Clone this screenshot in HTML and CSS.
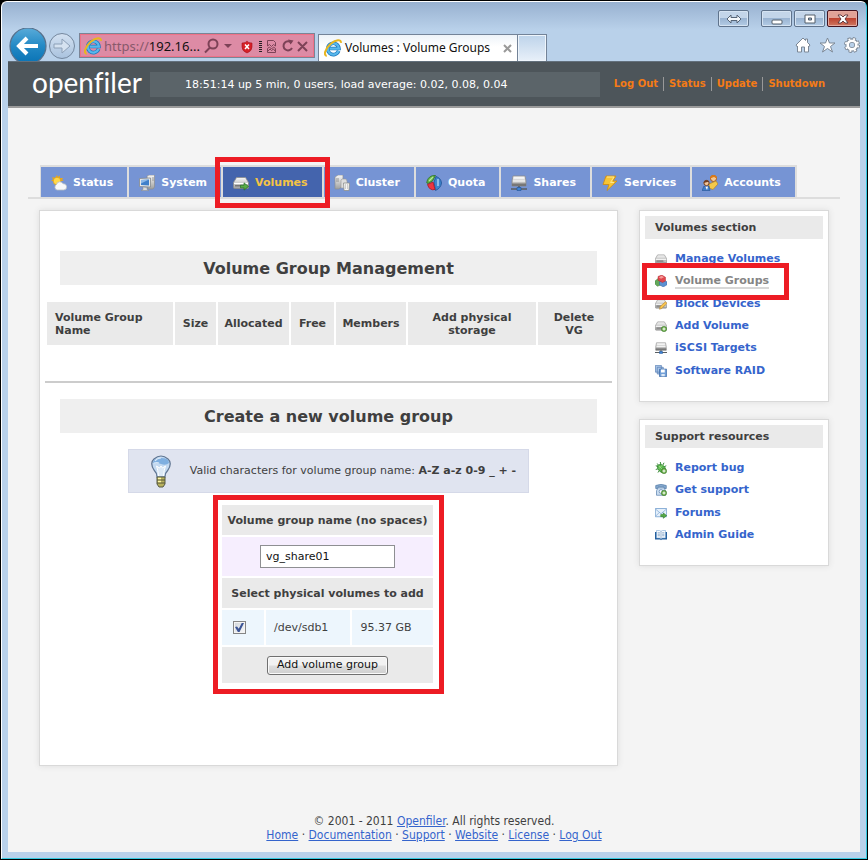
FILE: index.html
```html
<!DOCTYPE html>
<html lang="en">
<head>
<meta charset="utf-8">
<title>Volumes : Volume Groups</title>
<link rel="stylesheet" href="styles.css">
</head>
<body>
<svg class="defs" aria-hidden="true">
  <defs>
    <linearGradient id="blue" x1="0" y1="0" x2="0" y2="1"><stop offset="0" stop-color="#59abd9"/><stop offset=".5" stop-color="#2389c5"/><stop offset="1" stop-color="#0872b4"/></linearGradient>
    <linearGradient id="glass" x1="0" y1="0" x2="0" y2="1"><stop offset="0" stop-color="#d3e1f1"/><stop offset="1" stop-color="#a9c2de"/></linearGradient>
    <linearGradient id="metal" x1="0" y1="0" x2="0" y2="1"><stop offset="0" stop-color="#f8f8f8"/><stop offset="1" stop-color="#9fa09f"/></linearGradient>
    <symbol id="ie" viewBox="0 0 16 16">
      <path d="M13 10.600A5 5 0 1 1 13.300 8.500H5" fill="none" stroke="#1e78bd" stroke-width="3.200"/>
      <path d="M13 10.600A5 5 0 1 1 13.300 8.500H5" fill="none" stroke="#58b8ec" stroke-width="2"/>
      <path d="M2.500 14.800C-.5 15 .5 9 6 4.200 10.500.5 15.500 0 15 3.500" fill="none" stroke="#e8b620" stroke-width="1.800"/>
    </symbol>
    <symbol id="drive" viewBox="0 0 16 16">
      <path d="M3.500 2.500h9l3 5v5q0 1-1 1h-13q-1 0-1-1v-5z" fill="url(#metal)" stroke="#8b8b8b" stroke-width=".8"/>
      <path d="M1 8h14v1H1z" fill="#fff"/><path d="M2 10h9v1.500H2z" fill="#777"/><circle cx="13.500" cy="11" r=".8" fill="#d5e4d0"/>
    </symbol>
    <symbol id="server" viewBox="0 0 16 16">
      <path d="M2 1h12l1 5v5H1V6z" fill="url(#metal)" stroke="#8b8b8b" stroke-width=".8"/>
      <path d="M3 3h10M2 6h12" stroke="#fff"/><path d="M1 8.500h14v2.500H1z" fill="#777"/>
      <path d="M0 14h16M8 11v3" stroke="#5a5e62" stroke-width="1.600"/><path d="M6 12.500h4v3H6z" fill="#3c83d8" stroke="#205294" stroke-width=".6"/>
    </symbol>
    <symbol id="plus" viewBox="0 0 8 8"><circle cx="4" cy="4" r="3.600" fill="#65a843" stroke="#39752a" stroke-width=".6"/><path d="M4 2v4M2 4h4" stroke="#fff" stroke-width="1.300"/></symbol>
    <symbol id="arrow" viewBox="0 0 10 9"><path d="M.5 3h4V.5l5 4-5 4V6h-4z" fill="#58ad45" stroke="#247126" stroke-width=".8"/></symbol>
  </defs>
</svg>

<div class="window">
  <div class="titlebar">
    <button class="win-btn detach" aria-label="Switch"><svg viewBox="0 0 16 10" width="16" height="10"><path d="M1 5l4-4v2.500h6V1l4 4-4 4V6.500H5V9z" fill="#f4f7fa" stroke="#566577"/></svg></button>
    <button class="win-btn" aria-label="Minimize"><svg viewBox="0 0 12 12" width="12" height="12"><rect x="1" y="7" width="10" height="4" rx="1" fill="#fff" stroke="#525e6b"/></svg></button>
    <button class="win-btn" aria-label="Maximize"><svg viewBox="0 0 12 12" width="12" height="12"><path d="M1 2h10v8H1zM4.500 5v2h3V5z" fill="#fff" fill-rule="evenodd" stroke="#525e6b"/></svg></button>
    <button class="win-btn close" aria-label="Close"><svg viewBox="0 0 12 10" width="12" height="10"><path d="M1 1h3l2 2 2-2h3L8 5l3 4H8L6 7 4 9H1l3-4z" fill="#fff" stroke="#573238" stroke-width=".9"/></svg></button>
  </div>

  <div class="navbar">
    <button class="nav-btn" aria-label="Back"><svg class="back" viewBox="0 0 40 38" width="40" height="38"><circle cx="20" cy="18" r="18" fill="url(#blue)" stroke="#57708b" stroke-width="1.200"/><path d="M30 18H12M19 10l-8 8 8 8" fill="none" stroke="#fff" stroke-width="4"/></svg></button>
    <button class="nav-btn" aria-label="Forward"><svg viewBox="0 0 28 36" width="28" height="36"><circle cx="14" cy="18" r="12.500" fill="url(#glass)" stroke="#74879e"/><path d="M6 16h8v-5l8 7-8 7v-5H6z" fill="#d5e2f0" stroke="#8da0b7"/></svg></button>
    <div class="address">
      <svg width="18" height="18"><use href="#ie"/></svg>
      <span class="url"><span class="scheme">https://</span>192.16...</span>
      <svg class="address-tools" viewBox="0 0 106 16" width="106" height="16">
        <g fill="none" stroke="#7d4257" stroke-width="2"><circle cx="9" cy="6" r="4.500"/><path d="M6 9.500L1 14.500"/><path d="M87.500 5A4.500 4.500 0 1 0 88 10M94 4l9 9M103 4l-9 9"/></g>
        <path d="M20 6h8l-4 4zM84 1.500l5.500 1-3 4z" fill="#7d4257"/>
        <path d="M38 5q4 0 5-2 1 2 5 2v4q0 4-5 6-5-2-5-6z" fill="#d62027" stroke="#a5131b" stroke-width=".6"/><path d="M41 6.500l4 4.500M45 6.500L41 11" stroke="#fff" stroke-width="1.500"/>
        <path d="M56.500 3v11" stroke="#222" stroke-width="3" stroke-dasharray="1 1"/>
        <path d="M63.500 2.500h6l2 2v3.500l-2-1.500-2 2-2-2-2 1.500zM63.500 10.500l2-1.500 2 2 2-2 2 1.500v4h-8z" fill="none" stroke="#7d4257"/><path d="M64 13l2-2 1.500 1.500 2-1.500 1.500 2" fill="none" stroke="#7d4257"/>
      </svg>
    </div>
    <div class="browser-tab">
      <svg width="18" height="18"><use href="#ie"/></svg>
      <span>Volumes : Volume Groups</span>
      <button class="tab-close" aria-label="Close tab"><svg viewBox="0 0 9 9" width="9" height="9"><path d="M1 1l7 7M8 1L1 8" stroke="#999" stroke-width="2"/></svg></button>
    </div>
    <button class="new-tab" aria-label="New tab"></button>
    <div class="nav-icons">
      <svg viewBox="0 0 16 16" width="16" height="16"><path d="M1 8l7-7 2.500 2.500V2h2v3.500L15 8l-1 1.500-.5-.5v6h-4v-5h-3v5h-4V9l-.5.500z" fill="#fff" stroke="#7b8795"/></svg>
      <svg viewBox="0 0 17 16" width="17" height="16"><path d="M8.500 1l2 5h5.500l-4.500 3.500 2 5.500-5-3.500-5 3.500 2-5.500L1 6h5.500z" fill="#fff" stroke="#7b8795"/></svg>
      <svg viewBox="0 0 16 16" width="16" height="16"><circle cx="8" cy="8" r="6.500" fill="none" stroke="#7b8795" stroke-width="3" stroke-dasharray="3 2.100"/><circle cx="8" cy="8" r="4.500" fill="none" stroke="#7b8795" stroke-width="4.400"/><circle cx="8" cy="8" r="6.200" fill="none" stroke="#fff" stroke-width="1.800" stroke-dasharray="1.900 2.970" stroke-dashoffset="-.5"/><circle cx="8" cy="8" r="4.300" fill="none" stroke="#fff" stroke-width="2.600"/></svg>
    </div>
  </div>

  <div class="page">
    <header class="site-header">
      <div class="logo">openfiler</div>
      <div class="uptime">18:51:14 up 5 min, 0 users, load average: 0.02, 0.08, 0.04</div>
      <nav class="account-links"><a href="#">Log Out</a><a href="#">Status</a><a href="#">Update</a><a href="#">Shutdown</a></nav>
    </header>

    <nav class="tabs">
      <ul>
        <li><a href="#"><svg class="icon" viewBox="0 0 16 16"><path d="M6 0l1 2 2-1.500V3l3 0-1 2 2 1H0l2-1.500L1 2l3 1z" fill="#e9a61c"/><circle cx="6" cy="6" r="3.800" fill="#ffd84a" stroke="#d79a19" stroke-width=".7"/><path d="M6 15a3 3 0 0 1-.5-5.500 3.500 3.500 0 0 1 6.500-.8A3 3 0 0 1 13 15z" fill="#f7f8f9" stroke="#b6bcc2" stroke-width=".8"/></svg>Status</a></li>
        <li><a href="#"><svg class="icon" viewBox="0 0 16 16"><path d="M8 1l2-1h5.500v12L14 14H9z" fill="url(#metal)" stroke="#898d90" stroke-width=".7"/><path d="M13 3h2M13 5h2" stroke="#888" stroke-width=".8"/><path d="M.5 3.500l11-.5v9l-11-.5z" fill="#e6e8e9" stroke="#858a8e" stroke-width=".8"/><path d="M2 5l8-.5v6L2 10z" fill="#3f7fca"/><path d="M2 5l8-.5-8 4z" fill="#8bb7e8"/><path d="M4 12l4 .5v2l2 1H2l2-1z" fill="#d9dbdc" stroke="#888" stroke-width=".5"/></svg>System</a></li>
        <li class="active"><a href="#"><svg class="icon" viewBox="0 0 16 16"><use href="#drive"/><use href="#arrow" x="7" y="7" width="9" height="9"/></svg>Volumes</a><span class="highlight tab-highlight"></span></li>
        <li><a href="#"><svg class="icon" viewBox="0 0 16 16"><path d="M1 2l3-2h5v11l-4 3H1z" fill="url(#metal)" stroke="#8c8f92" stroke-width=".7"/><path d="M2 4h3M2 6h3" stroke="#777" stroke-width=".7"/><path d="M8 4h4l1 2v7H7V5z" fill="#ddd" stroke="#999" stroke-width=".6"/><path d="M9.500 8h6l-.5 7.500h-5z" fill="#f4f4f3" stroke="#8d8f8d" stroke-width=".8"/><path d="M11.500 9v5M13.500 9v5" stroke="#bbb" stroke-width=".7"/></svg>Cluster</a></li>
        <li><a href="#"><svg class="icon" viewBox="0 0 16 16"><path d="M.8 8C1 3 5 0 9.500.5L6.500 6 2 8.500z" fill="#63b345" stroke="#2b7321" stroke-width=".8"/><path d="M10 1.500q5 1.500 5.500 6.500-.5 5-6 7.500L8 7z" fill="#3c83cb" stroke="#1e5296" stroke-width=".8"/><path d="M1.500 9.500L7 7l2 7.500Q3.500 16 1.500 9.500z" fill="#ec3540" stroke="#a81721" stroke-width=".8"/><path d="M12 4v7" stroke="#a5cef1" stroke-width="1.500"/><path d="M3 6l4-4" stroke="#b6e69c" stroke-width="1.300"/></svg>Quota</a></li>
        <li><a href="#"><svg class="icon" viewBox="0 0 16 16"><use href="#server"/></svg>Shares</a></li>
        <li><a href="#"><svg class="icon" viewBox="0 0 16 16"><path d="M4 1h10l-3 5h4L5 15.500l2-6H1z" fill="#f8c535" stroke="#cf8d17" stroke-width=".9"/><path d="M5 2h7L8.500 7.500H12" fill="none" stroke="#ffe88d"/></svg>Services</a></li>
        <li><a href="#"><svg class="icon" viewBox="0 0 16 16"><circle cx="11.500" cy="3.500" r="3" fill="#f4c993" stroke="#a95517"/><path d="M8 3.500Q8 0 11.500 0T15 3.500L12 2z" fill="#dc7a16"/><path d="M7 9l7-3 2 3-5 5.500L7 13z" fill="#f3c94a" stroke="#b88420" stroke-width=".7"/><circle cx="4.500" cy="8" r="2.600" fill="#f3c69a" stroke="#74421f"/><path d="M1.500 8q1-4.500 6-1.500z" fill="#713c20"/><path d="M0 15.500L2 11l2 1.500L7 11l1 4.500z" fill="#3f7dca" stroke="#245394" stroke-width=".6"/><path d="M3.500 12l1.500 3 1-3.500z" fill="#fff"/></svg>Accounts</a></li>
      </ul>
    </nav>

    <div class="columns">
      <main class="panel main-panel">
        <h2>Volume Group Management</h2>
        <table class="groups">
          <thead><tr><th class="name">Volume Group Name</th><th class="size">Size</th><th class="allocated">Allocated</th><th class="free">Free</th><th class="members">Members</th><th class="storage">Add physical storage</th><th class="delete">Delete VG</th></tr></thead>
        </table>
        <hr>
        <h2>Create a new volume group</h2>
        <div class="hint">
          <svg viewBox="0 0 24 34" width="24" height="34"><path d="M8 23Q8 19 5 16 .5 9 5 5q7-6 14 0 4.500 4 0 11-3 3-3 7z" fill="#c3d9f1" stroke="#5f7592" stroke-width="1.200"/><path d="M4 9Q4 4 12 4t8 5q-3 3-8 1T4 9z" fill="#7fafe0"/><path d="M6 7q2-3 6-3M5 9q3-1 5 0" fill="none" stroke="#d9e8f7" stroke-width="1.200"/><path d="M9.500 22Q9 16 7.500 12l3 2 1.500-2 1.500 2 3-2q-1.500 4-2 10" fill="#dbe8f6" stroke="#fff"/><path d="M8 23h8v7l-2 3h-4l-2-3z" fill="#b8b15c" stroke="#575a45"/><path d="M8 26h8M8 29h8" stroke="#54553b" stroke-width="1.200"/><path d="M9 24.500h3M9 27.500h3" stroke="#fff7a9" stroke-width="1.300"/></svg>
          <p>Valid characters for volume group name: <b>A-Z a-z 0-9 _ + -</b></p>
        </div>
        <form class="create-form">
          <table>
            <tr><th colspan="3"><label for="vg-name">Volume group name (no spaces)</label></th></tr>
            <tr class="name-row"><td colspan="3"><input id="vg-name" type="text" value="vg_share01"></td></tr>
            <tr><th colspan="3">Select physical volumes to add</th></tr>
            <tr class="volume-row"><td><input id="sdb1" type="checkbox" checked></td><td><label for="sdb1">/dev/sdb1</label></td><td>95.37 GB</td></tr>
            <tr class="submit-row"><td colspan="3"><button type="button">Add volume group</button></td></tr>
          </table>
        </form>
      </main>

      <aside>
        <section class="panel side-panel">
          <h3>Volumes section</h3>
          <ul class="six">
            <li><svg viewBox="0 0 16 16"><use href="#drive"/></svg><a href="#">Manage Volumes</a></li>
            <li class="current"><svg viewBox="0 0 16 16"><path d="M0 8l5-4 5 3-1 6-6 2-3-3z" fill="#64a95a" stroke="#3c7b39" stroke-width=".6"/><path d="M6 9l5-2 5 2v4l-5 3-5-3z" fill="#5d91d2" stroke="#2d5d9f" stroke-width=".6"/><path d="M4 2l5-2 5 3v5l-4 2-6-3z" fill="#e1464d" stroke="#ae2830" stroke-width=".6"/><path d="M5 3l4-2 3 2-4 2z" fill="#f69b98"/></svg><a href="#">Volume Groups</a><span class="highlight item-highlight"></span></li>
            <li><svg viewBox="0 0 16 16"><use href="#drive"/><path d="M6 15l1-4 7-6 2 2-7 7z" fill="#f8c44d" stroke="#a97926" stroke-width=".7"/></svg><a href="#">Block Devices</a></li>
            <li><svg viewBox="0 0 16 16"><use href="#drive"/><use href="#plus" x="8" y="8" width="8" height="8"/></svg><a href="#">Add Volume</a></li>
            <li><svg viewBox="0 0 16 16"><use href="#server"/></svg><a href="#">iSCSI Targets</a></li>
            <li><svg viewBox="0 0 16 16"><path d="M.5.500h8v9h-8zM3 3h8v9H3z" fill="#a9c5e7" stroke="#5c82b5"/><path d="M6 5.500h9.500v10H6z" fill="#72a0d8" stroke="#3d6caa"/><path d="M8 6h5v4H8z" fill="#fff"/><path d="M8.500 12h4.500v3H8.500z" fill="#dde8f5"/></svg><a href="#">Software RAID</a></li>
          </ul>
        </section>
        <section class="panel side-panel">
          <h3>Support resources</h3>
          <ul>
            <li><svg viewBox="0 0 16 16"><path d="M1 5l3 1M3 2l2 3M7 0l1 4M12 1l-2 4M1 10l3-1M4 14l2-3M15 5l-4 2" stroke="#348833" stroke-width="1.300"/><path d="M3 5q3-3 7-1 5 3 4 8-3 4-7 1-4-3-4-8z" fill="#59b84d" stroke="#2f7c2e"/><path d="M5 5l7 7M5 9l5-5" stroke="#a9df91"/><use href="#plus" x="8" y="8" width="8" height="8"/></svg><a href="#">Report bug</a></li>
            <li><svg viewBox="0 0 16 16"><path d="M1 2q7-3 14 0v4h-3V4H4v2H1z" fill="#86a9ce" stroke="#547da9"/><path d="M4 5h8l2 4v6H2V9z" fill="#c9dcef" stroke="#6086b2"/><circle cx="8" cy="10" r="2.500" fill="#fff" stroke="#6086b2"/><use href="#plus" x="8" y="8" width="8" height="8"/></svg><a href="#">Get support</a></li>
            <li><svg viewBox="0 0 16 16"><path d="M.5 2h15v11H.5z" fill="#e5f0fb" stroke="#6b9acb"/><path d="M1 3l7 6 7-6M1 12l5-5M15 12l-5-5" fill="none" stroke="#82aad4"/><use href="#arrow" x="7" y="7" width="9" height="9"/></svg><a href="#">Forums</a></li>
            <li><svg viewBox="0 0 16 16"><path d="M0 4h16v10H9l-1 1-1-1H0z" fill="#245f9e"/><path d="M2 2h4l2 1 2-1h4v10h-4l-2 1-2-1H2z" fill="#f8fbfe" stroke="#6f9dcd" stroke-width=".7"/><path d="M8 3v10M3.500 5h3M3.500 7h3M3.500 9h3M9.500 5h3M9.500 7h3M9.500 9h3" stroke="#789cc2"/></svg><a href="#">Admin Guide</a></li>
          </ul>
        </section>
      </aside>
    </div>

    <footer>
      <p>© 2001 - 2011 <a href="#">Openfiler</a>. All rights reserved.</p>
      <p><a href="#">Home</a> · <a href="#">Documentation</a> · <a href="#">Support</a> · <a href="#">Website</a> · <a href="#">License</a> · <a href="#">Log Out</a></p>
    </footer>
  </div>
</div>
</body>
</html>
```
FILE: styles.css
```css
* { box-sizing: border-box; }

body {
  margin: 0;
  padding: 1px;
  background: #000;
  font: 11px/14px "DejaVu Sans", Verdana, sans-serif;
  color: #3f3f3f;
}

h2, h3, p, ul { margin: 0; padding: 0; }
ul { list-style: none; }
svg { display: block; flex: none; }
button { font: inherit; padding: 0; border: 0; background: none; }
.defs { position: absolute; width: 0; height: 0; }

/* Browser window */
.window {
  display: flex;
  flex-direction: column;
  min-height: calc(100vh - 2px);
  padding: 0 6px 6px;
  border: 1px solid #fff;
  border-right-color: #35c9e0;
  border-bottom-color: #35c9e0;
  border-radius: 6px 6px 0 0;
  background: linear-gradient(#98b1d0, #b9d1ea 28px);
}

.titlebar {
  display: flex;
  justify-content: flex-end;
  gap: 2px;
  height: 26px;
  padding: 8px 2px 1px 0;
}

.win-btn {
  display: flex;
  align-items: center;
  justify-content: center;
  width: 31px;
  height: 17px;
  border: 1px solid #5f738c;
  border-radius: 2px;
  background: linear-gradient(#c3d5e9 48%, #9ab4d2 50%, #b4cce5);
  box-shadow: inset 0 0 0 1px #d5e3f2;
}
.win-btn.detach { margin-right: 10px; }
.win-btn.close {
  border-color: #43131f;
  background: linear-gradient(#e0a297 48%, #bd4330 50%, #cf7862);
  box-shadow: inset 0 0 0 1px #e5aaa0;
}

.navbar {
  display: flex;
  align-items: flex-start;
  height: 33px;
  overflow: hidden;
  font: 13px/18px "Noto Sans", "Segoe UI", sans-serif;
}

.address {
  display: flex;
  align-items: center;
  width: 236px;
  height: 25px;
  margin: 5px 3px 0 3px;
  padding: 0 4px;
  border: 1px solid #7b8496;
  background: #dd8ba5;
  box-shadow: inset 0 0 0 1px #ee7288;
  color: #111;
}
.url { flex: 1; margin-left: 2px; white-space: nowrap; }
.scheme { color: #87596b; }

.browser-tab {
  display: flex;
  align-items: center;
  gap: 3px;
  width: 200px;
  height: 27px;
  margin-top: 6px;
  padding: 0 5px;
  border: 1px solid #738398;
  border-bottom: 0;
  background: linear-gradient(#edf3f9, #fff 12px);
  color: #111;
  font-size: 12px;
  white-space: nowrap;
}
.tab-close { margin-left: auto; }

.new-tab {
  width: 29px;
  height: 27px;
  margin-top: 6px;
  border: 1px solid #738398;
  border-width: 1px 1px 0 0;
  background: linear-gradient(#bdd3ea, #e8f0f9);
  box-shadow: inset 0 0 0 1px #eef5fc;
}

.nav-icons { display: flex; gap: 8px; margin: 9px 0 0 auto; }

/* Page */
.page {
  flex: 1;
  background: #f4f4f4;
}

.site-header {
  display: flex;
  align-items: center;
  height: 47px;
  padding: 0 35px 0 24px;
  border-top: 1px solid #63707c;
  border-bottom: 2px solid #9b9b9b;
  background: #4d555a;
}
.logo {
  width: 118px;
  padding-bottom: 4px;
  color: #fff;
  font: 28px/30px Lato, sans-serif;
  font-variant-ligatures: none;
}
.uptime {
  flex: 1;
  margin-right: 14px;
  padding: 0 0 0 35px;
  background: #5b6469;
  color: #fff;
  line-height: 25px;
}
.account-links { display: flex; font-size: 10px; font-weight: bold; }
.account-links a { color: #f47b16; text-decoration: none; }
.account-links a + a { margin-left: 5px; padding-left: 5px; border-left: 1px solid #999; }

.tabs {
  margin: 57px 20px 0;
  padding-left: 12px;
  border-bottom: 2px solid #ddd;
}
.tabs ul {
  display: flex;
  gap: 2px;
  width: max-content;
  padding: 2px 2px 0 1px;
  background: #ddd;
}
.tabs li { position: relative; background: #7694d4; }
.tabs .active { background: #4464ad; }
.tabs a {
  display: flex;
  align-items: center;
  gap: 6px;
  height: 30px;
  padding: 2px 14px 0 10px;
  color: #fff;
  font-weight: bold;
  text-decoration: none;
}
.tabs .active a { color: #f5c344; }
.icon { width: 16px; height: 16px; }

/* Red frames that mark the areas of interest */
.highlight {
  position: absolute;
  z-index: 1;
  border: 5px solid #ed1c24;
  pointer-events: none;
}
.tab-highlight { inset: -10px -8px -11px; }
.item-highlight { inset: -7px 34px -7px -13px; }

.columns {
  display: grid;
  grid-template-columns: 1fr 190px;
  align-items: start;
  gap: 21px;
  margin: 11px 31px 0;
}

.panel {
  border: 1px solid #d9d9d9;
  background: #fff;
  box-shadow: 0 0 6px #ddd;
}

.main-panel { padding: 40px 5px 71px; }

h2 {
  margin: 0 15px;
  padding-top: 1px;
  background: #efefef;
  font-size: 16px;
  line-height: 33px;
  text-align: center;
}

table { border-spacing: 2px; }
th { background: #eaeaea; }

.groups { width: 100%; margin-top: 15px; table-layout: fixed; }
.groups th { height: 43px; padding: 0 5px; line-height: 13px; }
.groups .name { padding: 0 8px; text-align: left; }
.groups .size { width: 41px; }
.groups .allocated { width: 71px; }
.groups .free { width: 43px; }
.groups .members { width: 70px; }
.groups .storage { width: 128px; padding: 0 16px; }
.groups .delete { width: 72px; padding: 0 12px; }

hr {
  height: 2px;
  margin: 34px 0 16px;
  border: 0;
  background: #ccc;
}

.hint {
  display: flex;
  align-items: center;
  gap: 17px;
  width: max-content;
  height: 44px;
  margin: 16px auto 2px;
  padding: 0 12px 0 20px;
  border: 1px solid #d5d9e8;
  background: #e0e4f0;
}

.create-form {
  width: max-content;
  margin: 0 auto;
  padding: 3px 4px 4px 2px;
  border: 5px solid #ed1c24;
}
.create-form table { width: 215px; }
.create-form th { height: 30px; padding: 1px 5px 0; }
.create-form td { padding: 0 8px; }
.name-row td { height: 39px; background: #f6eefe; text-align: center; }
.volume-row td { height: 35px; background: #edf6fd; }
.submit-row td { height: 36px; background: #eaeaea; text-align: center; }

input[type="text"] {
  width: 135px;
  height: 23px;
  padding: 0 5px;
  border: 1px solid #8e8f92;
  background: #fff;
  color: #111;
  font: inherit;
}

input[type="checkbox"] {
  display: block;
  appearance: none;
  width: 13px;
  height: 13px;
  margin: 0 3px;
  border: 1px solid #858585;
  background: linear-gradient(135deg, #cfd4da, #fafafa);
  box-shadow: inset 0 0 0 1px #f4f4f4;
}
input[type="checkbox"]:checked::before {
  content: "";
  display: block;
  width: 9px;
  height: 9px;
  margin: 1px;
  background: #3c5596;
  clip-path: polygon(0 45%, 22% 40%, 42% 65%, 75% 0, 100% 0, 50% 100%, 32% 100%);
}

.submit-row button {
  height: 19px;
  padding: 0 9px;
  border: 1px solid #707070;
  border-radius: 3px;
  background: linear-gradient(#f2f2f2 48%, #dedede 52%, #cfcfcf);
  box-shadow: inset 0 0 0 1px #fafafa;
  color: #111;
}

aside { display: grid; gap: 17px; }
.side-panel { padding: 5px 5px 19px; }
.side-panel h3 {
  padding: 1px 0 0 10px;
  background: #eaeaea;
  font-size: 11px;
  line-height: 22px;
}
.side-panel ul {
  display: grid;
  grid-auto-rows: 1fr;
  height: 89px;
  margin: 9px 0 0 10px;
}
.side-panel .six { height: 134px; }
.side-panel li {
  position: relative;
  display: flex;
  align-items: center;
  gap: 8px;
  font-weight: bold;
}
.side-panel svg { width: 12px; height: 12px; }
.side-panel a { color: #3564cc; text-decoration: none; }
.side-panel .current a {
  border-bottom: 2px solid #d8d8d8;
  color: #858585;
  line-height: 13px;
}

footer {
  margin-top: 48px;
  font-family: "DejaVu Sans Condensed", Tahoma, sans-serif;
  font-size: 12px;
  text-align: center;
}
footer a { color: #3564cc; }
```
